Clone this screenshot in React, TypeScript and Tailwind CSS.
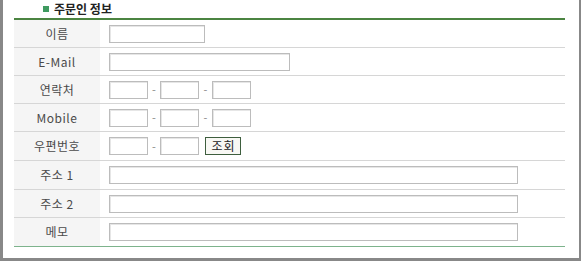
const font = { fontFamily: '"Noto Sans CJK KR", "Noto Sans", sans-serif' };

function Box({ w }: { w: string }) {
  return <div className={`h-[18px] border border-[#bcbcbc] bg-white shadow-[inset_1px_1px_0_#e6e6e6] ${w}`} />;
}

function Dash({ w }: { w: string }) {
  return <span className={`text-center text-[11px] leading-none text-[#888] ${w}`}>-</span>;
}

function Row({
  label,
  h,
  last,
  children,
}: {
  label: string;
  h: string;
  last?: boolean;
  children: React.ReactNode;
}) {
  return (
    <div className={`flex ${h} ${last ? "border-b border-[#7db38c]" : "border-b border-[#d6d6d6]"}`}>
      <div className="w-[86px] shrink-0 bg-[#f5f5f5] flex items-center justify-center text-[12px] text-[#4a4a4a] tracking-[0.5px]">
        {label}
      </div>
      <div className="flex-1 flex items-center pl-[9px]">{children}</div>
    </div>
  );
}

export default function App() {
  return (
    <div
      className="w-[581px] h-[261px] bg-white border-l-[3px] border-r-[2px] border-b-[3px] border-[#888888]"
      style={font}
    >
      <div className="h-[18px] flex items-center pl-[40px]">
        <span className="w-[6px] h-[6px] bg-[#3f9a60] mr-[5px]" />
        <span className="text-[12px] font-bold text-[#222] leading-none">주문인 정보</span>
      </div>

      <div className="ml-[11px] w-[551px] border-t-2 border-[#4b8441]">
        <Row label="이름" h="h-[28px]">
          <Box w="w-[96px]" />
        </Row>
        <Row label="E-Mail" h="h-[28px]">
          <Box w="w-[181px]" />
        </Row>
        <Row label="연락처" h="h-[28px]">
          <Box w="w-[39px]" />
          <Dash w="w-[12px]" />
          <Box w="w-[39px]" />
          <Dash w="w-[13px]" />
          <Box w="w-[39px]" />
        </Row>
        <Row label="Mobile" h="h-[28px]">
          <Box w="w-[39px]" />
          <Dash w="w-[12px]" />
          <Box w="w-[39px]" />
          <Dash w="w-[13px]" />
          <Box w="w-[39px]" />
        </Row>
        <Row label="우편번호" h="h-[29px]">
          <Box w="w-[39px]" />
          <Dash w="w-[12px]" />
          <Box w="w-[39px]" />
          <button className="ml-[6px] w-[36px] h-[18px] border border-[#3e5e3e] bg-[#f8f8f4] text-[12px] leading-none text-[#222] tracking-[1px] pl-[1px]">
            조회
          </button>
        </Row>
        <Row label="주소 1" h="h-[29px]">
          <Box w="w-[409px]" />
        </Row>
        <Row label="주소 2" h="h-[28px]">
          <Box w="w-[409px]" />
        </Row>
        <Row label="메모" h="h-[29px]" last>
          <Box w="w-[409px]" />
        </Row>
      </div>
    </div>
  );
}
